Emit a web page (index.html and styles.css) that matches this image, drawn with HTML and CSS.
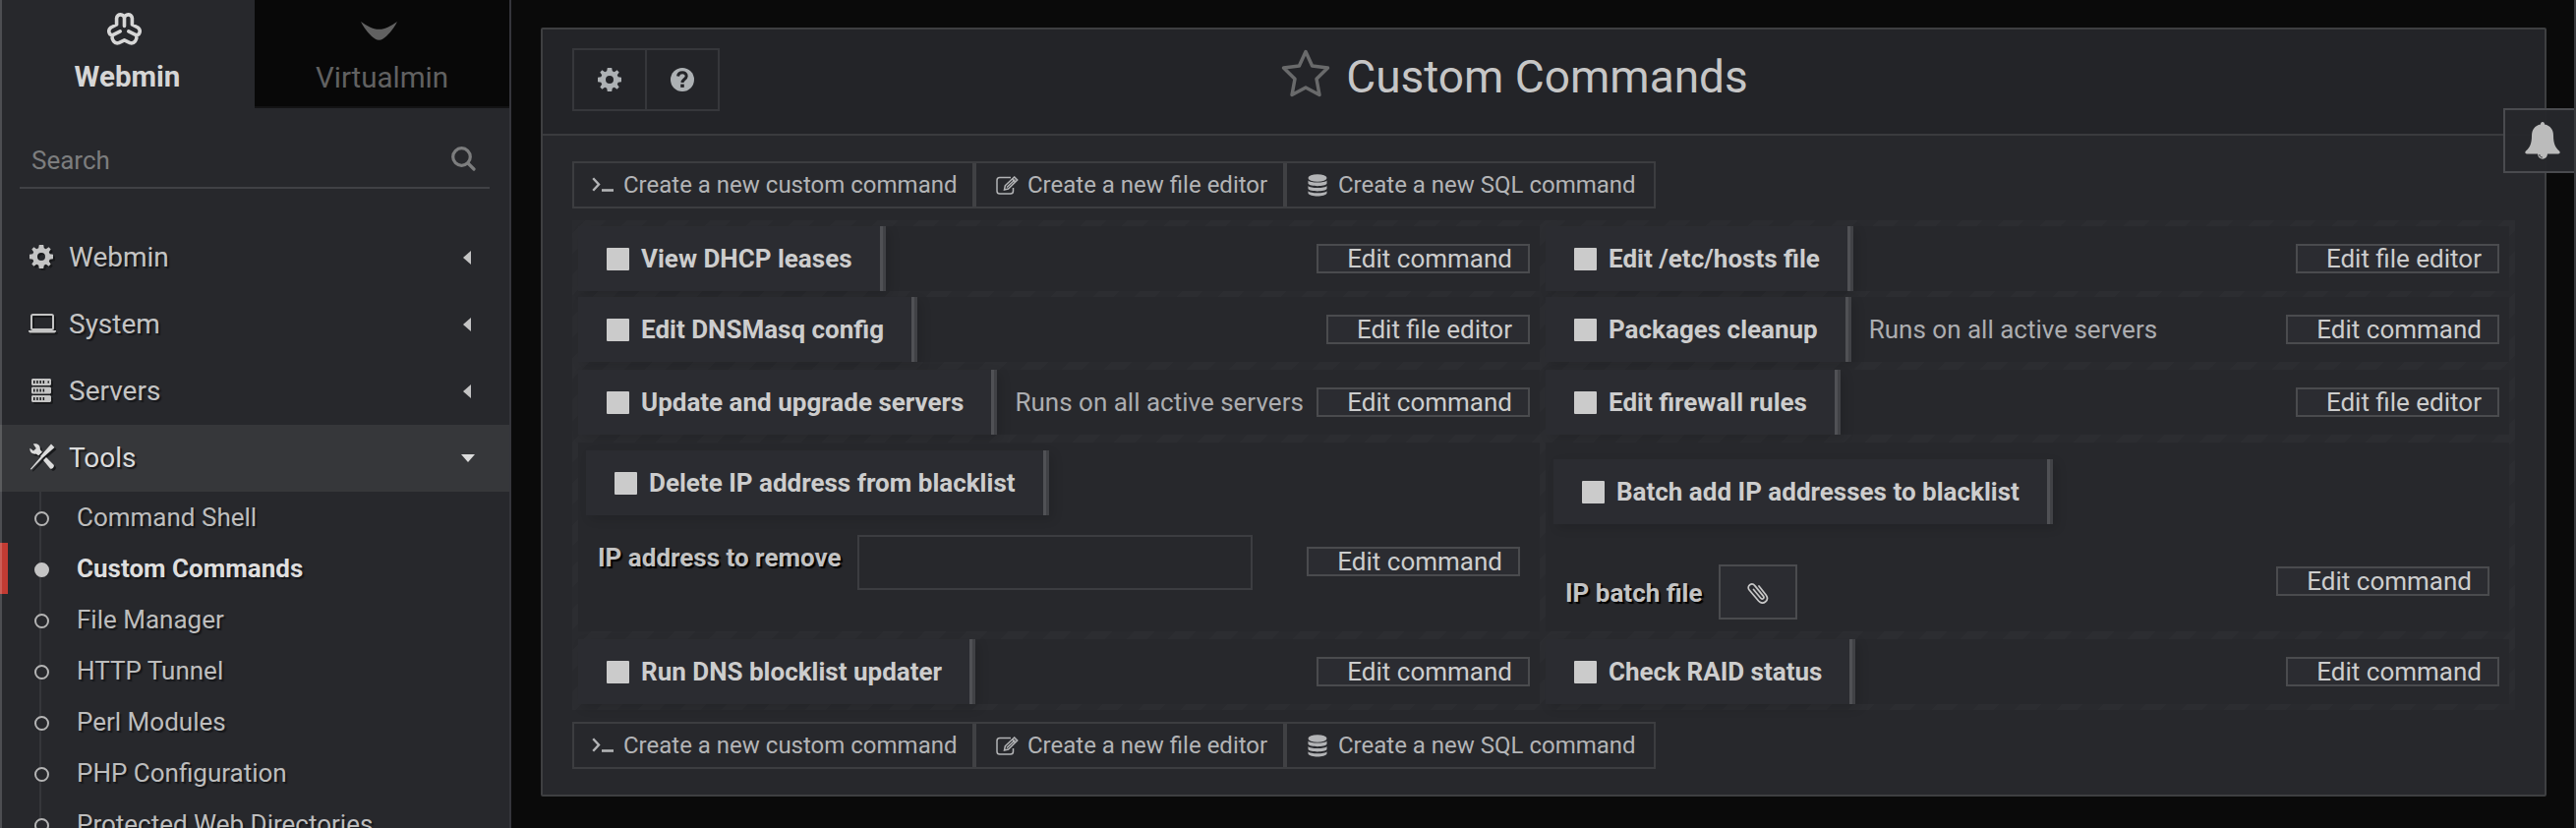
FILE: index.html
```html
<!DOCTYPE html>
<html lang="en">
<head>
<meta charset="utf-8">
<title>Custom Commands</title>
<link rel="stylesheet" href="styles.css">
</head>
<body>
<svg class="defs" width="0" height="0">
  <symbol id="gear" viewBox="0 0 24 24"><path fill-rule="evenodd" d="M9.800 0h4.400l.6 3.300 2 .9L19.600 2.300l2.100 2.100-1.900 2.800.9 2 3.300.6v4.400l-3.300.6-.9 2 1.900 2.800-2.100 2.100-2.800-1.900-2 .9-.6 3.300H9.800l-.6-3.300-2-.9-2.800 1.900-2.100-2.100 1.900-2.800-.9-2L0 14.200V9.800l3.300-.6.9-2-1.900-2.800 2.100-2.100 2.800 1.900 2-.9zM12 8a4 4 0 1 0 0 8 4 4 0 0 0 0-8z"/></symbol>
  <symbol id="term" viewBox="0 0 22 16"><path d="M1.200 1.200 7 7.500 1.200 13.800" fill="none" stroke="currentColor" stroke-width="2.400"/><path d="M10 12.200h12v2.600H10z"/></symbol>
  <symbol id="edit" viewBox="0 0 23 19"><g fill="none" stroke="currentColor" stroke-width="1.500"><path d="M15 1.500H3.800A2.800 2.800 0 0 0 1 4.300v10.900A2.800 2.800 0 0 0 3.800 18h10.900a2.800 2.800 0 0 0 2.800-2.800V12"/><path d="M9.300 9.800 18.700 1l3 3-9.200 9-4 1z"/><path d="M11 11.500 19.500 3.500M16.500 3l3 3"/></g></symbol>
  <symbol id="db" viewBox="0 0 20 23"><ellipse cx="10" cy="4" rx="9.500" ry="3.800"/><path d="M.5 6.500c2 2.800 17 2.800 19 0v3.300c-1.500 3.200-17.500 3.200-19 0zM.5 12c2 2.800 17 2.800 19 0v3c-1.500 3.200-17.500 3.200-19 0zM.5 17.200c2 2.800 17 2.800 19 0v2.300c-1.500 4-17.500 4-19 0z"/></symbol>
</svg>
<div class="app">
  <aside class="side">
    <div class="tabs">
      <div class="tab tab-on">
        <svg class="logo-w" viewBox="0 0 35 33"><g fill="none" stroke="currentColor" stroke-width="3.600" stroke-linecap="round" stroke-linejoin="round"><path d="M17.500 13.500V5.500M17.500 5.500C17.500 1 10 .4 9.600 5.500V12L3.800 15C.4 17.500 1.600 22.300 5.200 22.800 4.200 27 7.500 32 11.800 30.600L17.500 27.800 23.200 30.600C27.500 32 30.800 27 29.800 22.800 33.400 22.300 34.600 17.500 31.200 15L25.400 12V5.500C25 .4 17.500 1 17.500 5.500"/><path d="M5.200 22.800 13.200 18.800M29.800 22.800 21.800 18.800"/></g></svg>
        <span>Webmin</span>
      </div>
      <div class="tab tab-off">
        <svg class="logo-v" viewBox="0 0 37 19"><path d="M0 0C6 4 12 7.800 18.500 7.800S31 4 37 0C33 8 27 14.500 22.500 17.500 20 19.300 17 19.300 14.500 17.500 10 14.500 4 8 0 0z"/></svg>
        <span>Virtualmin</span>
      </div>
    </div>
    <div class="search"><span>Search</span>
      <svg width="25" height="25" viewBox="0 0 25 25"><g fill="none" stroke="currentColor" stroke-width="3.200" stroke-linecap="round"><circle cx="10.500" cy="10.500" r="8.800"/><path d="M17 17l6 6"/></g></svg>
    </div>
    <nav class="menu">
      <div class="item"><svg class="ic" viewBox="0 0 24 24"><use href="#gear"/></svg><span>Webmin</span><i class="left"></i></div>
      <div class="item"><svg class="ic ic-lap" viewBox="0 0 28 20"><rect x="3" y="1" width="22" height="15" rx="1.500" fill="none" stroke="currentColor" stroke-width="2"/><path d="M0 17h28v1.200l-1.500 1.400h-25L0 18.200z"/></svg><span>System</span><i class="left"></i></div>
      <div class="item"><svg class="ic ic-srv" viewBox="0 0 20 24"><path fill-rule="evenodd" d="M1 0h18l1 1v5l-1 1H1L0 6V1zM2 2v3h1.500V2zM5.200 2v3h1.500V2zM8.400 2v3h1.500V2zM11.600 2v3h1.500V2zM16.500 2.500v2h1.500v-2zM1 8.500h18l1 1v5l-1 1H1l-1-1v-5zM2 10.500v3h1.500v-3zM5.200 10.500v3h1.500v-3zM8.400 10.500v3h1.500v-3zM11.600 10.500v3h1.500v-3zM1 17h18l1 1v5l-1 1H1l-1-1v-5zM2 19v3h1.500v-3zM5.200 19v3h1.500v-3zM8.400 19v3h1.500v-3zM11.600 19v3h1.500v-3z"/></svg><span>Servers</span><i class="left"></i></div>
      <div class="item item-on"><svg class="ic ic-tools" viewBox="0 0 26 27"><path d="M22 .5 25.500 4 13 15 11 13zM11.500 13.500 13 15 1.800 26.500.800 26zM14 17l3-3 7.500 7.500c1.500 2-1.500 5.500-3.500 4zM3.800.6c4-1.200 7.600 1.400 7 5.400l2.200 2.800-3.800 3.500L6.500 10.500C3 11.500-.2 8.500.5 4.800L4 7.500 6.800 5z"/></svg><span>Tools</span><i class="down"></i></div>
    </nav>
    <ul class="sub">
      <li>Command Shell</li>
      <li class="cur">Custom Commands</li>
      <li>File Manager</li>
      <li>HTTP Tunnel</li>
      <li>Perl Modules</li>
      <li>PHP Configuration</li>
      <li>Protected Web Directories</li>
    </ul>
  </aside>
  <main class="main">
    <section class="panel">
      <header class="head">
        <div class="group">
          <div class="sq"><svg width="24" height="24"><use href="#gear"/></svg></div>
          <div class="sq"><svg width="24" height="24" viewBox="0 0 24 24"><circle cx="12" cy="12" r="12"/><path class="q" d="M7.500 8.600C8.300 3.500 16.300 3.700 16.200 8.500 16.100 11.500 12 11.500 12 15" /><path class="qd" d="M10.200 16.600h3.600v3.300h-3.600z"/></svg></div>
        </div>
        <h1><svg width="52" height="50" viewBox="0 0 52 50"><path d="M26 3.500 32.600 18 48.500 20 37 31.200 40 47.500 26 40 12 47.500 15 31.200 3.500 20 19.400 18z" fill="none" stroke="currentColor" stroke-width="3.500" stroke-linejoin="round"/></svg><span>Custom Commands</span></h1>
      </header>
      <div class="body">
        <div class="bar">
          <div class="act a1"><svg width="22" height="16"><use href="#term"/></svg><span>Create a new custom command</span></div>
          <div class="act a2"><svg width="23" height="19"><use href="#edit"/></svg><span>Create a new file editor</span></div>
          <div class="act a3"><svg width="20" height="23"><use href="#db"/></svg><span>Create a new SQL command</span></div>
        </div>
        <div class="grid">
          <div class="cell"><div class="name"><b></b>View DHCP leases</div><div class="btn">Edit command</div></div>
          <div class="cell"><div class="name"><b></b>Edit /etc/hosts file</div><div class="btn">Edit file editor</div></div>
          <div class="cell"><div class="name"><b></b>Edit DNSMasq config</div><div class="btn">Edit file editor</div></div>
          <div class="cell"><div class="name"><b></b>Packages cleanup</div><p>Runs on all active servers</p><div class="btn">Edit command</div></div>
          <div class="cell"><div class="name"><b></b>Update and upgrade servers</div><p>Runs on all active servers</p><div class="btn">Edit command</div></div>
          <div class="cell"><div class="name"><b></b>Edit firewall rules</div><div class="btn">Edit file editor</div></div>
          <div class="cell tall t1">
            <div class="name"><b></b>Delete IP address from blacklist</div>
            <div class="line"><label>IP address to remove</label><input class="field" type="text"><div class="btn">Edit command</div></div>
          </div>
          <div class="cell tall t2">
            <div class="name"><b></b>Batch add IP addresses to blacklist</div>
            <div class="line"><label>IP batch file</label><div class="clip"><svg width="22" height="23" viewBox="0 0 22 23"><path d="M6.500 8.500 13.800 17.300c1.700 2 4.200-.2 2.600-2.200L7.800 4.600C4.800 1-.9 4.600 2 8.800L11.500 20c4.500 5 11.500-.5 7.800-5.800L12 5" fill="none" stroke="currentColor" stroke-width="1.700" stroke-linecap="round"/></svg></div><div class="btn">Edit command</div></div>
          </div>
          <div class="cell"><div class="name"><b></b>Run DNS blocklist updater</div><div class="btn">Edit command</div></div>
          <div class="cell"><div class="name"><b></b>Check RAID status</div><div class="btn">Edit command</div></div>
        </div>
        <div class="bar">
          <div class="act a1"><svg width="22" height="16"><use href="#term"/></svg><span>Create a new custom command</span></div>
          <div class="act a2"><svg width="23" height="19"><use href="#edit"/></svg><span>Create a new file editor</span></div>
          <div class="act a3"><svg width="20" height="23"><use href="#db"/></svg><span>Create a new SQL command</span></div>
        </div>
      </div>
    </section>
  </main>
  <div class="bell"><svg width="36" height="38" viewBox="0 0 36 38"><path d="M18 0c1.500 0 2 1 2 2.500 6 1 9 5.500 9 11.500 0 8 2 12 6 15.500 1.200 1.200.8 3-1 3H2c-1.800 0-2.200-1.800-1-3C5 26 7 22 7 14 7 8 10 3.500 16 2.500 16 1 16.500 0 18 0z"/><path d="M13 32h10c0 7.500-10 7.500-10 0z"/><path d="M14.800 33c0 2 1.400 3 3 3" fill="none" stroke="#2a2b2f" stroke-width="1"/></svg></div>
</div>
</body>
</html>
```
FILE: styles.css
```css
* { box-sizing: border-box; }
body { margin: 0; background: #0a0a0a; font-family: Roboto, "Liberation Sans", sans-serif; font-size: 26px; color: #c4c4c4; overflow: hidden; }
svg { display: block; flex: none; fill: currentColor; }
.defs { position: absolute; }
.app { position: relative; display: flex; width: 2620px; height: 842px; overflow: hidden; }
.app::before { content: ""; position: absolute; z-index: 3; inset: 0 auto 0 0; width: 2px; background: rgba(255,255,255,.18); }
.app::after { content: ""; position: absolute; z-index: 3; inset: 0 0 0 auto; width: 2px; background: #3a3b3e; }

.side { flex: none; width: 520px; height: 842px; background: #27282c; border-right: 2px solid #35353b; overflow: hidden; }
.tabs { display: flex; height: 110px; }
.tab { width: 259px; display: flex; flex-direction: column; align-items: center; font-size: 29.500px; line-height: 32px; }
.tab-on { color: #d6d6d6; font-weight: 700; padding-top: 13px; }
.tab-on span { margin-top: 16px; }
.tab-off { background: #080808; color: #616161; border-bottom: 2px solid #131314; padding-top: 22px; }
.tab-off span { margin-top: 22px; }
.logo-w { width: 35px; height: 33px; margin-right: 7px; }
.logo-v { width: 37px; height: 19px; margin-right: 7px; }
.search { display: flex; justify-content: space-between; height: 62px; margin: 20px 20px 36px; padding: 19px 14px 0 12px; border-bottom: 2px solid #404145; color: #7c7d7e; line-height: 30px; }
.search span { margin-top: -1px; }
.item { display: flex; align-items: center; height: 68px; padding: 0 36px 0 30px; font-size: 28px; text-shadow: 2px 2px 1px #16171a; }
.item span { flex: 1; margin-top: -1px; }
.ic { width: 24px; height: 24px; margin: -3px 16px 0 0; filter: drop-shadow(2px 2px 0 #18191b); }
.ic-lap { width: 28px; height: 20px; margin: -3px 13px 0 -1px; }
.ic-srv { width: 20px; margin: -2px 18px 0 2px; }
.ic-tools { width: 26px; height: 27px; margin-right: 14px; }
.left, .down { border: 7px solid transparent; width: 0; height: 0; }
.left { border-width: 7px 8px 7px 0; border-right-color: #c4c4c4; margin-right: 3px; }
.down { border-width: 8px 7px 0; border-top-color: #dcdcdc; margin-right: -1px; }
.item-on { background: #36373a; color: #dcdcdc; }
.sub { position: relative; margin: 0; padding: 0; list-style: none; }
.sub::before { content: ""; position: absolute; left: 40px; top: 0; width: 2px; height: 364px; background: #35363a; }
.sub li { position: relative; height: 52px; line-height: 52px; padding-left: 78px; color: #bdbdbd; text-shadow: 2px 2px 1px #16171a; }
.sub li::before { content: ""; position: absolute; left: 35px; top: 20px; width: 11px; height: 11px; border: 2px solid #b4b4b4; border-radius: 50%; background: #27282c; }
.sub .cur { color: #dedede; font-weight: 700; border-left: 8px solid #c23b33; padding-left: 70px; }
.sub .cur::before { left: 27px; background: #c4c4c4; border-color: #c4c4c4; }

.main { flex: 1; padding: 28px 30px 0; }
.panel { height: 782px; border: 2px solid #3e3f41; background: #27282c; border-radius: 2px; }
.head { height: 108px; display: grid; grid-template-columns: 1fr auto 1fr; background: #232428; border-bottom: 2px solid #3a3b3e; padding: 19px 30px 0; align-items: start; }
.group { display: flex; width: 150px; height: 64px; border: 2px solid #36373b; color: #adb1b4; }
.sq { flex: 1; display: flex; align-items: center; justify-content: center; }
.sq + .sq { border-left: 2px solid #36373b; }
.q { fill: none; stroke: #232428; stroke-width: 3; }
.qd { fill: #232428; }
h1 { margin: 0; padding-right: 60px; display: flex; gap: 15px; font-weight: 400; font-size: 46px; line-height: 58px; color: #c6c6c6; }
h1 svg { color: #696a6b; }
.body { padding: 26px 30px 0; }
.bar { display: flex; width: 1102px; height: 48px; border: 2px solid #3c3d40; color: #b3b4b6; font-size: 24px; line-height: 44px; }
.act { display: flex; align-items: center; white-space: nowrap; }
.act + .act { border-left: 4px solid #404144; }
.a1 { width: 405px; padding-left: 18px; gap: 10px; }
.a2 { width: 316px; padding-left: 20px; gap: 9px; }
.a3 { padding-left: 21px; gap: 11px; }

.grid { display: grid; grid-template-columns: 978px 980px; grid-template-rows: 66px 66px 68px 194px 68px; gap: 6px; width: 1976px; height: 498px; margin: 12px 0; padding: 6px; background: repeating-linear-gradient(-45deg, #292a2e 0 15px, #2c2d31 15px 30px); }
.cell { display: flex; align-items: center; background: #27282c; padding-right: 10px; min-width: 0; }
.cell:nth-child(n+5) { margin-top: 2px; }
.name { display: flex; align-items: center; height: 66px; padding: 0 30px 0 29px; background: linear-gradient(#3c3d41, #3c3d41) right / 3px 100% no-repeat, #2b2c31; border-right: 0; font-weight: 700; color: #cdcdcd; box-shadow: 4px 4px 10px rgba(0,0,0,.12); white-space: nowrap; }
.name { padding-right: 34px; background: linear-gradient(90deg, #505155 50%, #414246 50%) right / 6px 100% no-repeat, #2b2c31; }
.name b { width: 23px; height: 23px; margin-right: 12px; background: #cbcbcb; border-radius: 1px; }
.cell p { margin: 0 0 0 18px; color: #acadb0; white-space: nowrap; }
.btn { margin-left: auto; height: 30px; border: 2px solid #4a4b4e; background: #2b2c31; color: #cdcdcd; padding: 0 16px 0 29px; line-height: 27px; white-space: nowrap; }
.tall { flex-direction: column; align-items: flex-start; padding: 8px 20px 0 8px; }
.line { display: flex; width: 100%; }
label { color: #c3c3c3; font-weight: 700; line-height: 30px; text-shadow: 2px 2px 1px #000; white-space: nowrap; padding-left: 12px; }
.field { width: 402px; height: 56px; background: #27282c; border: 2px solid #3c3d41; padding: 0; }
.clip { display: flex; align-items: center; justify-content: center; width: 80px; height: 56px; border: 2px solid #4a4b4e; background: #2b2c31; color: #c8c8c8; }
.t1 .line { margin-top: 20px; }
.t1 label { width: 276px; margin-top: 8px; }
.t1 .btn { margin-top: 12px; }
.t2 { padding-top: 17px; }
.t2 .line { margin-top: 41px; }
.t2 label { width: 168px; margin-top: 14px; }
.t2 .btn { margin-top: 2px; }

.bell { position: absolute; z-index: 2; right: 0; top: 110px; width: 74px; height: 66px; border: 2px solid #4a4b4f; border-right: 0; background: rgba(39,40,44,.96); color: #bbb; padding: 12px 0 0 20px; }
```
